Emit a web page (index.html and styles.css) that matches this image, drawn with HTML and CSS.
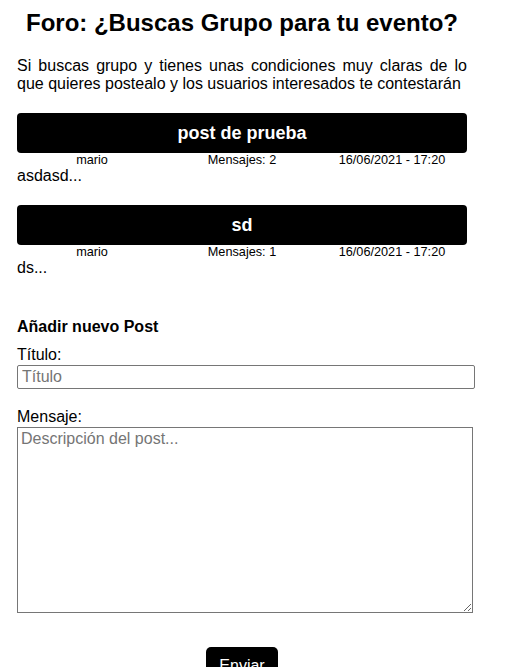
FILE: index.html
```html
<!DOCTYPE html>
<html lang="es">
<head>
<meta charset="utf-8">
<title>Foro</title>
<link rel="stylesheet" href="styles.css">
</head>
<body>
<main class="main">
  <h2 class="title">Foro: ¿Buscas Grupo para tu evento?</h2>
  <p class="intro">Si buscas grupo y tienes unas condiciones muy claras de lo que quieres postealo y los usuarios interesados te contestarán</p>

  <article class="post">
    <div class="post-head">post de prueba</div>
    <div class="post-meta">
      <span>mario</span>
      <span>Mensajes: 2</span>
      <span>16/06/2021 - 17:20</span>
    </div>
    <div class="post-body">asdasd...</div>
  </article>

  <article class="post">
    <div class="post-head">sd</div>
    <div class="post-meta">
      <span>mario</span>
      <span>Mensajes: 1</span>
      <span>16/06/2021 - 17:20</span>
    </div>
    <div class="post-body">ds...</div>
  </article>

  <form class="new-post">
    <h4 class="new-title">Añadir nuevo Post</h4>
    <label class="label" for="titulo">Título:</label>
    <input class="field" id="titulo" type="text" placeholder="Título">
    <label class="label label-gap" for="mensaje">Mensaje:</label>
    <textarea class="area" id="mensaje" placeholder="Descripción del post..."></textarea>
    <div class="actions">
      <button class="send" type="button">Enviar</button>
    </div>
  </form>
</main>
</body>
</html>
```

FILE: styles.css
```css
html, body {
  margin: 0;
  padding: 0;
  background: #fff;
}
body {
  font-family: "Liberation Sans", Arial, sans-serif;
  font-size: 16px;
  color: #000;
}
.main {
  width: 450px;
  margin: 0 0 0 17px;
  padding-top: 9px;
}
.title {
  margin: 0 0 20px;
  font-size: 24px;
  font-weight: bold;
  text-align: center;
}
.intro {
  margin: 0;
  text-align: justify;
}
.post {
  margin-top: 20px;
}
.post-head {
  height: 40px;
  background: #000;
  color: #fff;
  border-radius: 4px;
  font-weight: bold;
  font-size: 18px;
  display: flex;
  align-items: center;
  justify-content: center;
}
.post-meta {
  display: grid;
  grid-template-columns: 1fr 1fr 1fr;
  font-size: 12.7px;
  text-align: center;
}
.post-body {
  font-size: 16px;
}
.new-post {
  margin-top: 41px;
  display: flex;
  flex-direction: column;
}
.new-title {
  margin: 0 0 10px;
  font-size: 16px;
  font-weight: bold;
}
.label {
  display: block;
  margin-bottom: 1px;
}
.label-gap {
  margin-top: 19px;
}
.field {
  box-sizing: border-box;
  width: 458px;
  height: 24px;
  margin: 0;
  padding: 1px 4px;
  border: 1px solid #767676;
  border-radius: 2px;
  font-family: "Liberation Sans", Arial, sans-serif;
  font-size: 16px;
}
.area {
  box-sizing: border-box;
  width: 456px;
  height: 186px;
  margin: 0;
  padding: 2px 3px;
  border: 1px solid #767676;
  border-radius: 0;
  font-family: "Liberation Sans", Arial, sans-serif;
  font-size: 16px;
  resize: both;
}
.field::placeholder,
.area::placeholder {
  color: #757575;
}
.actions {
  display: flex;
  justify-content: center;
  margin-top: 34px;
}
.send {
  background: #000;
  color: #fff;
  border: none;
  border-radius: 5px;
  padding: 10px 13px;
  font-family: "Liberation Sans", Arial, sans-serif;
  font-size: 16px;
}
```
